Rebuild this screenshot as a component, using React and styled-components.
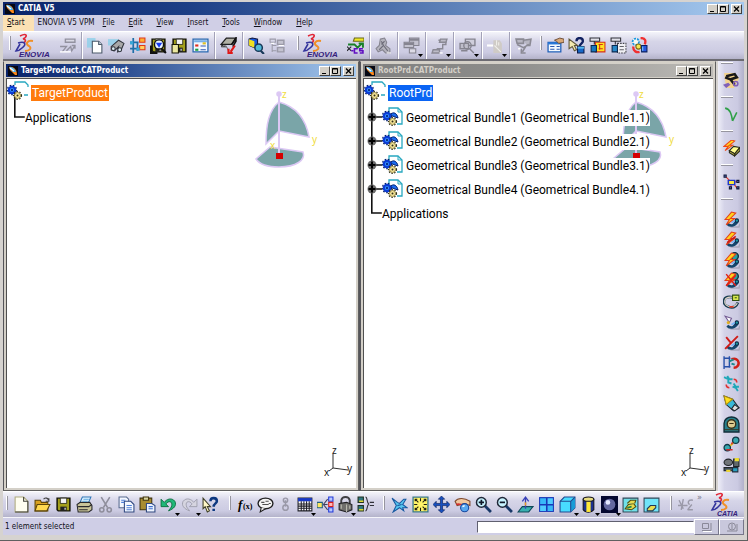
import React, { useState } from "react";
import styled, { createGlobalStyle } from "styled-components";

const GlobalStyle = createGlobalStyle`
  *, *::before, *::after {
    box-sizing: border-box;
    padding: 0;
    margin: 0;
  }

  body {
    background: #d4d0c8;
    font-family: "DejaVu Sans Condensed", "Noto Sans", sans-serif;
    font-size: 8px;
    color: #101018;
  }

  button, input {
    font: inherit;
    color: inherit;
  }
`;

const Frame = styled.div`
  min-height: 100vh;
  display: flex;
  flex-direction: column;
  padding: 2px 3px 5px 3px;
  border-right: 1px solid #606060;
  border-bottom: 1px solid #606060;
  background: #d6d3d0;
`;

const TitleBar = styled.header`
  display: flex;
  align-items: center;
  height: 13px;
  padding: 0 2px;
  gap: 3px;
  color: ${props => (props.$inactive ? "#d4d0c8" : "#ffffff")};
  background: ${props => (props.$inactive
    ? "linear-gradient(90deg, #808080, #8c8c8a 40%, #bdbbb7)"
    : "linear-gradient(90deg, #0a246a, #1d3f86 25%, #a6caf0)")};
`;

const Title = styled.h1`
  flex: 1;
  font-family: "DejaVu Sans Condensed", sans-serif;
  font-size: 8px;
  line-height: 12px;
  font-weight: bold;
  white-space: nowrap;
`;

const WindowButtons = styled.div`
  display: flex;

  & > :last-child {
    margin-left: 2px;
  }
`;

const WindowButton = styled.button`
  width: 11px;
  height: 10px;
  display: flex;
  border: 1px solid;
  border-color: #ffffff #404040 #404040 #ffffff;
  background: #d4d0c8;
`;

const MenuBar = styled.nav`
  display: flex;
  height: 16px;
  background: #d0cfe6;
`;

const MenuItem = styled.button`
  padding: 0 7px;
  border: none;
  font-size: 8px;
  line-height: 14px;
  white-space: nowrap;
  background: ${props => (props.$open ? "#fbe1b4" : "transparent")};

  &:first-child {
    padding: 0 9px 0 4px;
  }

  &:nth-child(2) {
    padding: 0 1px 0 4px;
  }
`;

const ToolBar = styled.div`
  display: flex;
  align-items: center;
  height: ${props => (props.$bottom ? "26px" : "28px")};
  border-top: 1px solid #ffffff;
  background: linear-gradient(#f4f4fa, #d6d5e8 35%, #cccbe2 75%, #b4b3ca);
`;

const ToolGroup = styled.div`
  display: flex;
  align-items: center;
  align-self: stretch;
  padding: 0 3px;
  border-right: ${props => (props.$divided ? "1px solid #a3a2b8" : "none")};
  box-shadow: ${props => (props.$divided ? "1px 0 #ffffff" : "none")};
`;

const SideBar = styled.aside`
  display: flex;
  flex-direction: column;
  align-items: center;
  width: 26px;
  margin-left: 2px;
  padding: 1px 0 10px;
  background: linear-gradient(90deg, #eeeef8, #d4d3e8 25%, #cbcae2 75%, #b2b1ca);
`;

const SideGroup = styled.div`
  display: flex;
  flex-direction: column;
  justify-content: space-between;
  padding: ${props => (props.$fill ? "9px 0 6px" : "6px 0")};
  flex: ${props => (props.$fill ? 1 : "none")};
`;

const Grip = styled.span`
  flex: none;
  align-self: flex-start;
  width: 2px;
  height: 14px;
  margin: ${props => (props.$wide ? "4px 4px 0 8px" : "4px 3px 0")};
  border-left: 1px solid #ffffff;
  border-right: 1px solid #96959f;
`;

const SideGrip = styled.span`
  width: 12px;
  height: 2px;
  margin-right: 8px;
  border-top: 1px solid #ffffff;
  border-bottom: 1px solid #96959f;
`;

const Tool = styled.button`
  position: relative;
  flex: none;
  width: ${props => props.$size || 21}px;
  height: 20px;
  display: flex;
  align-items: center;
  justify-content: center;
  border: none;
  background: transparent;
`;

const Drop = styled.svg`
  position: absolute;
  right: -1px;
  bottom: -1px;
`;

const Workspace = styled.main`
  flex: 1;
  display: flex;
  border-top: 2px solid #6c6b72;
`;

const Documents = styled.div`
  flex: 1;
  display: grid;
  grid-template-columns: 1fr 1fr;
  gap: 1px;
  background: #55555a;
`;

const DocWindow = styled.section`
  display: flex;
  flex-direction: column;
  padding: 2px;
  border: 1px solid;
  border-color: #d4d0c8 #606060 #606060 #55555a;
  background: #d4d0c8;
`;

const Viewport = styled.div`
  flex: 1;
  position: relative;
  margin-top: 1px;
  border-top: 1px solid #505050;
  border-left: 1px solid #505050;
  background: #ffffff;
`;

const Tree = styled.ul`
  list-style: none;
`;

const TreeRow = styled.li`
  display: flex;
  align-items: center;
  height: ${props => (props.$root ? "27px" : "24px")};
  padding-left: ${props => (props.$root ? "0" : "7px")};
`;

const Label = styled.span`
  position: relative;
  z-index: 1;
  padding: ${props => (props.$mark ? "0 1px" : "0")};
  margin-left: ${props => (props.$gap ? "3px" : "0")};
  font-family: Roboto, "Noto Sans", sans-serif;
  font-size: 12px;
  line-height: 16px;
  white-space: nowrap;
  color: ${props => (props.$mark ? "#ffffff" : "#000000")};
  background: ${props => props.$mark || "#ffffff"};
`;

const Compass = styled.svg`
  position: absolute;
  top: 1px;
  right: 35px;
`;

const Axes = styled.svg`
  position: absolute;
  right: 0;
  bottom: 8px;
`;

const StatusBar = styled.footer`
  display: flex;
  align-items: center;
  height: 18px;
  padding-left: 2px;
  border-top: 1px solid #f4f4fa;
  background: #cfcee6;
`;

const StatusText = styled.p`
  flex: 1;
  font-size: 8px;
`;

const CommandInput = styled.input`
  width: 29.4%;
  height: 12px;
  padding: 0 2px;
  border: 1px solid;
  border-color: #606070 #ffffff #ffffff #606070;
  background: #ffffff;
`;

const StatusButton = styled.button`
  width: 25px;
  height: 16px;
  display: flex;
  align-items: center;
  justify-content: center;
  border: 1px solid;
  border-color: #ffffff #77768a #77768a #ffffff;
  background: #c9c8dc;
`;

const Chevron = styled.span`
  align-self: flex-start;
  font-size: 9px;
  color: #77768a;
`;

const Spacer = styled.span`
  flex: 1;
`;

const gears = (
  <>
    <circle cx="5" cy="5" r="3.200" fill="#3a9cff" stroke="#0a3cd8" strokeWidth="2.200" />
    <circle cx="5" cy="5" r="4.700" fill="none" stroke="#04206e" strokeWidth="1.200" strokeDasharray="1.600 1.600" />
    <circle cx="5" cy="5" r="1.200" fill="#0a2c90" />
    <circle cx="10.500" cy="10.500" r="3" fill="#f6e69c" stroke="#9a8a40" strokeWidth="1" />
    <circle cx="10.500" cy="10.500" r="4" fill="none" stroke="#303018" strokeWidth="1.200" strokeDasharray="1.400 1.500" />
    <circle cx="10.500" cy="10.500" r="1" fill="#303018" />
  </>
);

const bolt = <path d="M8 1 2 8l4 0-3 5 8-6H7l5-5z" fill="#ffd21c" stroke="#e4421c" strokeWidth="1" />;
const roll = (
  <>
    <path d="M7 15h8l1-3" fill="none" stroke="#a9a8bd" strokeWidth="1.5" />
    <path d="M4 12c3 3 8 2 10-3M10 13l4-5" fill="none" stroke="#14466c" strokeWidth="2.4" />
    <circle cx="13" cy="9" r="1.6" fill="#1c9ca0" stroke="#102848" />
    <path d="M8 11l3-2" stroke="#6fb6ff" strokeWidth="1.4" />
  </>
);
const floppy = (
  <>
    <path d="M2 2h12v12H3l-1-1z" fill="#a4a01c" stroke="#141408" strokeWidth="1.4" />
    <path d="M5 2h6v5H5z" fill="#f4f4f4" stroke="#141408" strokeWidth=".7" />
    <path d="M5 10h6v4H5z" fill="#202020" />
    <path d="M9 11h1v2H9z" fill="#fff" />
  </>
);

const icons = {
  publish: <g fill="none" stroke="#92919f" strokeWidth="1.3"><path d="M6 2h9v3H6z" fill="#d9d8e4" /><path d="M1 9h6l-4 5M7 13l4-4 1 4 3-5M12 8h3v3" /><path d="M1 14h10" stroke="#fff" /></g>,
  openDoc: <><path d="M0 1h8v9H0z" fill="#8ccfea" opacity=".8" /><path d="M5 4h6l3 3v8H5z" fill="#fff" stroke="#4a5868" /><path d="M11 4v3h3" fill="#c8d8e4" stroke="#4a5868" /></>,
  search: <><path d="M0 2h10v6H0z" fill="#8ccfea" opacity=".8" /><path d="M3 9l7-6 5 3-3 7-3 1 1-5-4 4-3-1z" fill="#a8a8a8" stroke="#30343c" /><circle cx="5" cy="11" r="1.8" fill="#d8e8f0" stroke="#30343c" /><circle cx="11" cy="12" r="1.8" fill="#d8e8f0" stroke="#30343c" /></>,
  structure: <><path d="M4 1v14M1 5h8M1 11h14M8 5v8" stroke="#1f6fa8" strokeWidth="1.6" fill="none" /><path d="M10 1h5v4h-5z" fill="#ffb030" stroke="#e03818" /><path d="M10 8h5v4h-5z" fill="#ffd060" stroke="#e03818" /><path d="M1 4h3v3H1zM7 10h3v3H7z" fill="#38a8d8" /></>,
  saveSearch: <>{floppy}<path d="M1 8v7h6M11 11l4 4" stroke="#101010" strokeWidth="2" fill="none" /><circle cx="8.5" cy="7" r="4.3" fill="#e8f4ff" stroke="#101010" strokeWidth="1.3" /><path d="M5.500 5.500h6l-3 4.500z" fill="#1438f0" /></>,
  save: floppy,
  saveOptions: <>{floppy}<path d="M1 7h6v8H1z" fill="#ece8a0" stroke="#181808" /></>,
  list: <><path d="M1 2h14v12H1z" fill="#f4f8ff" stroke="#2868b0" strokeWidth="1.2" /><path d="M2 3h12v2H2z" fill="#78b0e8" /><path d="M3 7h3v2H3z" fill="#e03020" /><path d="M3 11h3v2H3z" fill="#20a040" /><path d="M10 5h3v2h-3z" fill="#e0c020" /><path d="M8 8.500h5M8 12h5" stroke="#3058b0" /></>,
  hammer: <><path d="M1 7l5-6h9l-4 6z" fill="#b0b0a4" stroke="#202020" strokeWidth="1.200" /><path d="M11 7l4-6v3l-3 5M2 7v2h4" fill="none" stroke="#101010" strokeWidth="1.500" /><path d="M2 9c3-2 5 1 6 4" stroke="#777" fill="none" /><path d="M14 8l-4 6M8 11v4h4" fill="none" stroke="#e01818" strokeWidth="2" /></>,
  cubeFind: <><path d="M1 2l3-1 5 1v7l-3 1-5-2z" fill="#1858e0" stroke="#101840" /><path d="M1 2l5 2v6L1 8z" fill="#f0e020" /><circle cx="10" cy="10" r="3.500" fill="#50b8d8" stroke="#183858" strokeWidth="1.400" /><path d="M12 13l3 3" stroke="#183858" strokeWidth="2" /></>,
  greyTree: <g fill="none" stroke="#9b9aa8"><path d="M1 2h5v3H1zM3 5v9M3 8h4M3 13h4" /><path d="M8 3h6v4H8zM8 10h6v4H8z" fill="#c4c3d0" strokeWidth="1.400" /><path d="M2 6h3M9 8h5" stroke="#fff" /></g>,
  vpm: <><path d="M7 1h9v3H6z" fill="#f0e828" stroke="#686818" /><path d="M1 7h6l3 3 4-4M11 6h4v4" fill="none" stroke="#188028" strokeWidth="1.800" /><path d="M0 9l4 4M4 9l-4 4" stroke="#202028" /><path d="M10 11H7v4h3M15 11h-3v2h3v2h-3M6 13H4" fill="none" stroke="#6010c0" strokeWidth="1.500" /></>,
  greyClip: <g fill="#b4b3bd" stroke="#85848f"><path d="M5 2l4-1 2 4-1 3 4 3v4l-4 0-3-3-4 2-2-3 3-3z" /><path d="M6 4l2 4-4 4M8 8l4 5M9 4l-3 3" fill="none" stroke="#6c6b78" /><path d="M11 15h4" stroke="#fff" /></g>,
  greyWindows: <g fill="#c3c2cf" stroke="#858490"><path d="M6 1h9v7H6z" /><path d="M1 5h9v5H1z" /><path d="M6 11h6v4H6z" fill="#dcdbe6" /><path d="M6 2.500h9M1 6.500h9" strokeWidth="2" /></g>,
  greyStep: <g fill="none" stroke="#8a8994" strokeWidth="1.300"><path d="M7 3h7v4h-3v4H6v3H1" /><path d="M9 2l6 0-1 3H8zM2 12h6v3H1z" fill="#bcbbc7" /><path d="M8 15h3" stroke="#fff" /></g>,
  greyZoomWin: <g fill="none" stroke="#85848f" strokeWidth="1.300"><path d="M6 2h9v6H6z" fill="#cfcedb" /><path d="M1 6h8v5H1z" fill="#bebdca" /><circle cx="8" cy="8" r="3.500" /><path d="M10 11l4 4M2 13h6" /></g>,
  greyHand: <g><path d="M0 8h6" stroke="#fff" strokeWidth="2" /><path d="M6 3h6l2 3v9H6z" fill="#cfcbc6" /><path d="M9 3v5M11 5v3M7 8l6 6" stroke="#efeeea" /></g>,
  greyHammer: <g fill="none" stroke="#8b8a94" strokeWidth="1.500"><path d="M1 2h7v4H2zM8 3l7-1-1 6h-3" fill="#b7b6c2" /><path d="M2 7l6 3 5-3M10 9l-3 5M6 11v4h4" /><path d="M3 11h2" stroke="#fff" /></g>,
  props: <><path d="M1 5h12v9H1z" fill="#f4faff" stroke="#2060b8" strokeWidth="1.200" /><path d="M1 5h12v2H1z" fill="#2878d8" /><path d="M3 9h4M3 11.500h4M9 9h3M9 11.500h3" stroke="#2858b0" /><path d="M7 3l5-2 4 1v3l-5 1-2-2z" fill="#d8a878" stroke="#604028" strokeWidth=".8" /></>,
  helpDb: <><path d="M1 2v9l3-2 2 4 2-1-2-4h3z" fill="#f4eab0" stroke="#605838" /><path d="M8 4c0-4 6-4 6 0 0 2-3 2-3 5" fill="none" stroke="#102060" strokeWidth="2.200" /><path d="M9 9h6v6H9z" fill="#1868c8" stroke="#081848" /><path d="M9 9h6v2H9z" fill="#58b8f0" /></>,
  dbYellow: <><path d="M6 5h9v9H6z" fill="#ffe020" stroke="#d83018" /><path d="M1 1h9v3H1zM5 4v3" fill="#e0e0e8" stroke="#303038" /><path d="M2 8h5v6H2z" fill="#1878c0" stroke="#082850" /><path d="M9 7h4M9 11h4M10 7v5" stroke="#d83018" /></>,
  dbGrey: <><path d="M7 6h8v9H7z" fill="#f0f0f4" stroke="#404048" strokeDasharray="1.500 1" /><path d="M1 1h9v3H1zM5 4v3" fill="#e0e0e8" stroke="#303038" /><path d="M2 8h5v6H2z" fill="#2888c8" stroke="#082850" /><path d="M9 9h4M9 12h4" stroke="#606068" /></>,
  dbSync: <><path d="M9 1c5 0 5 3 4 6M2 9c0 4 3 6 6 5" fill="none" stroke="#f03030" strokeWidth="2.200" /><circle cx="4.500" cy="4.500" r="3" fill="#f8f8f0" stroke="#1898e0" strokeWidth="1.600" strokeDasharray="2 1" /><circle cx="7" cy="9" r="2.400" fill="#f4e850" stroke="#806810" /><path d="M10 8h5v6h-5z" fill="#2858e0" stroke="#082060" /><path d="M11 9v4" stroke="#78d0ff" /></>,
  newDoc: <><path d="M2 1h8l4 4v10H2z" fill="#fffef0" stroke="#b0ac80" /><path d="M10 1v4h4M14 5v10H2" fill="none" stroke="#404038" /></>,
  open: <><path d="M1 4h5l1 2h6v8H1z" fill="#d8a020" stroke="#5c4408" /><path d="M3 8h12l-3 6H1z" fill="#ffd850" stroke="#5c4408" /><path d="M9 3c2-2 4-1 5 1M14 2v3h-3" fill="none" stroke="#404040" /></>,
  print: <><path d="M6 1h8l-3 7H3z" fill="#e4f4ff" stroke="#3078b8" /><path d="M1 8l3-2h9l2 3v4l-3 2H2z" fill="#c8c498" stroke="#28282c" /><path d="M2 10h10l3-2M3 13h8" stroke="#28282c" fill="none" /><path d="M7 3h5M6 5h5" stroke="#58a8e0" /></>,
  cut: <g fill="none" stroke="#8f8e9c" strokeWidth="1.500"><path d="M4 1l6 10M12 1L6 11" /><circle cx="4.500" cy="13" r="2" /><circle cx="11.500" cy="13" r="2" /></g>,
  copy: <><path d="M1 1h7l2 2v8H1z" fill="#f4f8ff" stroke="#5a6c90" /><path d="M6 5h6l3 3v7H6z" fill="#f4f8ff" stroke="#304880" /><path d="M8 9h5M8 11h5M8 13h5M3 4h4M3 6h3" stroke="#5080d8" /></>,
  paste: <><path d="M1 2h11v11H1z" fill="#a88c30" stroke="#40340c" /><path d="M4 1h5v3H4z" fill="#d8d4a0" stroke="#40340c" /><path d="M7 7h5l3 2v6H7z" fill="#eef4ff" stroke="#304880" /><path d="M9 10h4M9 12h4" stroke="#4070d0" /></>,
  undo: <path d="M1 3v7h7L5.500 7.500C8 4 12 5 11 9c0 2-2 3-3 5 5-2 8-5 6-9-3-4-8-2-10 1z" fill="#20b878" stroke="#086838" strokeWidth=".8" />,
  redo: <path d="M15 3v7H8l2.500-2.500C8 4 4 5 5 9c0 2 2 3 3 5C3 12 0 9 2 5c3-4 8-2 10 1z" fill="#d6d5e0" stroke="#9a99a8" strokeWidth=".8" />,
  help: <><path d="M1 2v10l2-2 2 5 2-1-2-4h3z" fill="#fff8c8" stroke="#404028" /><path d="M8 5c0-4 6-4 6 0 0 2-3 2-3 5M11 12v2" fill="none" stroke="#0c3880" strokeWidth="2.400" /></>,
  comment: <><ellipse cx="8" cy="7" rx="7" ry="5" fill="#f4f4f4" stroke="#202020" strokeWidth="1.300" /><path d="M4 11l-1 4 5-3" fill="#f4f4f4" stroke="#202020" /><path d="M4 6h3M8 5h3M5 8h6M11 7h2" stroke="#505050" /></>,
  link: <g fill="none" stroke="#9a99a8" strokeWidth="1.400"><circle cx="8" cy="4" r="2" /><circle cx="8" cy="11" r="2.500" /><path d="M8 4v6" /></g>,
  table: <><path d="M1 2h13v12H1z" fill="#fff" stroke="#202028" /><path d="M1 2h13v3H1z" fill="#1838c8" /><path d="M1 7.500h13M1 9.500h13M1 11.500h13M4 5v9M6.500 5v9M9 5v9M11.500 5v9" stroke="#202028" strokeWidth="1" /></>,
  graph: <><path d="M6 8l4-5M6 8h4M6 8l4 5" stroke="#404060" /><path d="M0 6h5v5H0z" fill="#ffe860" stroke="#206080" /><path d="M11 1h4v4h-4z" fill="#b8c8ff" stroke="#2038d8" /><path d="M11 6h4v4h-4z" fill="#ffb8b8" stroke="#d82020" /><path d="M11 11h4v4h-4z" fill="#b8c8ff" stroke="#2038d8" /></>,
  lock: <><path d="M4 7V4c1-4 7-4 8 0v4" fill="none" stroke="#404044" strokeWidth="1.800" /><path d="M2 7l7-1 5 2v5l-5 2-7-2z" fill="#706f6c" stroke="#202024" /><path d="M9 8v7M4 8v4M12 9v3" stroke="#bcbcb0" /></>,
  equiv: <><path d="M1 1h5v5H1zM1 9h5v5H1z" fill="#307880" stroke="#203020" /><path d="M2 5h4M2 13h4" stroke="#e0d830" strokeWidth="1.500" /><path d="M8 1c2 0 1 5 3 6.500C9 9 10 14 8 14M12 6h4M12 9h4" fill="none" stroke="#303038" /></>,
  fly: <><path d="M1 2l5 4 2 1 4-4 2 0-3 5 4 3-4 0 1 3-4-3-6 4 3-6z" fill="#58c8f0" stroke="#1858a0" /><path d="M6 9l4-1" stroke="#1858a0" strokeWidth="1.200" /></>,
  fit: <><path d="M1 1h14v14H1z" fill="#fff468" stroke="#38788c" strokeWidth="1.200" /><path d="M3 5V3h2M11 3h2v2M3 11v2h2M11 13h2v-2M3 3l3 3M13 3l-3 3M3 13l3-3M13 13l-3-3M8 2v3M8 11v3M2 8h3M11 8h3" fill="none" stroke="#202010" /></>,
  pan: <path d="M8 0l3 3H9v4h4V5l3 3-3 3V9H9v4h2l-3 3-3-3h2V9H3v2L0 8l3-3v2h4V3H5z" fill="#1850c0" stroke="#081c58" strokeWidth=".6" />,
  rotate: <><path d="M1 5c3-4 9-3 14 0v4l-5-2-7 2z" fill="#f0c8a0" stroke="#804c30" /><path d="M2 8c3-1 5 0 7 1" stroke="#d03030" strokeWidth="1.500" fill="none" /><circle cx="10" cy="11" r="3.800" fill="#58a8f0" stroke="#1848a0" /><path d="M8 10l2-1" stroke="#fff" strokeWidth="1.400" /></>,
  zoomIn: <><path d="M9 9l6 6" stroke="#183868" strokeWidth="2.600" /><circle cx="6" cy="6" r="4.600" fill="#c8f4ff" stroke="#202838" strokeWidth="1.400" /><path d="M6 3.500v5M3.500 6h5" stroke="#101828" strokeWidth="1.600" /></>,
  zoomOut: <><path d="M9 9l6 6" stroke="#183868" strokeWidth="2.600" /><circle cx="6" cy="6" r="4.600" fill="#c8f4ff" stroke="#202838" strokeWidth="1.400" /><path d="M3.500 6h5" stroke="#101828" strokeWidth="1.600" /></>,
  normal: <><path d="M5 10h10l-4 5H1z" fill="#38b0b0" stroke="#104858" /><path d="M8 12V2M5 5l3-4 3 4" fill="none" stroke="#3840b8" strokeWidth="1.200" /><path d="M8 6v3" stroke="#f0a020" strokeWidth="1.400" /></>,
  multiView: <><path d="M1 1h14v14H1z" fill="#1838b8" /><path d="M2 2h5.500v5.500H2zM9 9h5v5H9z" fill="#38b8f8" /><path d="M9 2h5v5.500H9zM2 9h5.500v5H2z" fill="#50ccff" /></>,
  cube: <><path d="M1 5l4-4h10v10l-4 4H1z" fill="#48dcff" stroke="#204890" /><path d="M11 5l4-4v10l-4 4z" fill="#189cd8" /><path d="M1 5h10v10M11 5l4-4" fill="none" stroke="#204890" /></>,
  shaded: <><path d="M3 3v10c2 3 8 3 10 0V3z" fill="#1c3090" stroke="#14141c" /><path d="M6 4h4v11H6z" fill="#ffe838" /><ellipse cx="8" cy="3" rx="5" ry="2" fill="#e8dc80" stroke="#14141c" /></>,
  sphere: <><path d="M0 0h16v16H0z" fill="#040830" /><circle cx="8" cy="8" r="5.500" fill="#6468a0" /><circle cx="6.500" cy="6" r="2.200" fill="#e4e8ff" /></>,
  hide: <><path d="M1 2h14v13H1z" fill="#70e0e8" stroke="#304858" /><path d="M3 12l3-4 5-1 2 3-4 3z" fill="#e8dc50" stroke="#504c10" /><path d="M5 7l3-3 5 0-1 3" fill="#e8dc50" stroke="#504c10" /><path d="M5 11l4-1" stroke="#18804c" strokeWidth="1.500" /></>,
  swap: <><path d="M1 2h14v13H1z" fill="#70e4f8" stroke="#304858" /><path d="M4 12l3-3h5v2l-3 3H4z" fill="#e8dc50" stroke="#203858" /></>,
  sketch: <g fill="none" stroke="#9a99a8" strokeWidth="1.300"><path d="M1 4l4 8M5 3l-2 10M0 9h9M14 4c-5-1-5 3-3 4M9 13h5M13 8l-4 5" /></g>,
  arm: <><path d="M1 1h10l4 5-5 9H3z" fill="#ffd470" opacity=".75" /><path d="M3 4l8-2 2 3-6 2 4 5M2 5l5 2" fill="none" stroke="#181818" strokeWidth="2.400" /><path d="M0 12l5-2 2 2-4 3z" fill="#8060b8" /><circle cx="12" cy="11" r="2" fill="none" stroke="#8060b8" strokeWidth="1.500" /></>,
  curve: <path d="M2 2c5 1 6 6 7 12M9 14l4-8" fill="none" stroke="#30a048" strokeWidth="1.500" />,
  flashBox: <><path d="M8 0L1 6h4L2 10l7-5H6l5-4z" fill="#ffe020" stroke="#f04818" /><path d="M6 10l4-4 6 1-5 6z" fill="#fffc90" stroke="#282818" /><path d="M6 10l5 3v2l-5-3zM11 13l5-6v3l-5 5z" fill="#c8c048" stroke="#282818" /></>,
  nodes: <><path d="M3 3l4 4M10 8l3-1M8 9l-1 4M10 9l3 4" stroke="#e83020" /><path d="M5 6h6v4H5z" fill="#f8e840" stroke="#2038c8" strokeWidth="1.400" /><path d="M1 1h2v2H1zM13 6h2v2h-2zM6 12h2v2H6zM13 12h2v2h-2z" fill="#5868b8" stroke="#101838" /></>,
  bolt1: <>{roll}{bolt}</>,
  bolt2: <>{roll}{bolt}<path d="M4 11l8-6" stroke="#c81818" strokeWidth="1.500" /></>,
  bolt3: <>{roll}<circle cx="11" cy="4" r="3.400" fill="#28a0a0" stroke="#103848" strokeWidth="1.400" />{bolt}</>,
  bolt4: <>{roll}<circle cx="11" cy="4" r="3.400" fill="#28a0a0" stroke="#103848" strokeWidth="1.400" />{bolt}<path d="M3 2l9 11M12 3L3 13" stroke="#e02018" strokeWidth="1.400" /></>,
  hose: <><path d="M9 4C-1 2-1 11 5 13c3 1 7 1 9-4" fill="none" stroke="#183c50" strokeWidth="2.600" /><path d="M9 4C0 3 0 10 5 12.500c3 1 6 1 8.500-3" fill="none" stroke="#e4d8c8" /><path d="M9 2h6v5H9z" fill="#d8e850" stroke="#305010" /><path d="M11 4h2v1h-2z" fill="#305010" /><path d="M6 13h4" stroke="#e03018" strokeWidth="1.400" /></>,
  trace: <>{roll}<path d="M2 3l6 2-2 4z" fill="#fff" stroke="#705890" /><circle cx="5" cy="9" r="1.500" fill="#e0b020" /></>,
  traceOff: <>{roll}<path d="M2 14L14 2M3 3l5 6" stroke="#d01c18" strokeWidth="1.800" /></>,
  magnet: <><path d="M1 2v12M1 4h6M1 12h6M6 2v11" stroke="#2850a8" strokeWidth="1.300" fill="none" /><path d="M8 5c8-3 9 8 2 8" fill="none" stroke="#d02018" strokeWidth="2.400" /><path d="M6 7l4-2M8 9l3 1" stroke="#18888c" strokeWidth="1.800" /></>,
  route: <><path d="M1 2l4 2v3l3 1M4 1l2 3h3M9 11l3 1 2 3M10 8l2 3h3" fill="none" stroke="#20a8b8" strokeWidth="1.800" /><path d="M6 12c-2 0-3-1-3-3M10 4c2 0 3 1 3 3" fill="none" stroke="#e03030" strokeWidth="1.400" /></>,
  marker: <><path d="M1 1l8 3 6 8-5 3-7-6z" fill="#38b8d8" stroke="#202830" /><path d="M1 1l8 3-6 5z" fill="#ffe020" stroke="#b09010" /><path d="M11 9l4 3-4 3-3-2z" fill="#dedede" stroke="#202830" /></>,
  clamp: <><path d="M1 15V7c0-8 14-8 14 0v8z" fill="#28808c" stroke="#102c38" strokeWidth="1.300" /><circle cx="8" cy="7.500" r="4" fill="#dccc90" stroke="#383018" strokeWidth="1.300" /><path d="M6 7h4M1 13h14" stroke="#383018" /></>,
  joint: <><path d="M5 11l6-6" stroke="#e8d030" strokeWidth="2" /><circle cx="12" cy="4" r="3" fill="#38a8b0" stroke="#103848" strokeWidth="1.200" /><circle cx="4" cy="11" r="3" fill="#38a8b0" stroke="#103848" strokeWidth="1.200" /><path d="M3 13h6M8 8l1-2" stroke="#d02828" strokeWidth="1.400" /></>,
  pipes: <><ellipse cx="5" cy="5" rx="4" ry="3" fill="#707478" stroke="#202428" /><path d="M10 2h5v7h-5z" fill="#60686c" stroke="#202428" /><path d="M11 1h4v3h-4z" fill="#f0e030" /><path d="M1 10h8v3H1z" fill="#485868" stroke="#202428" /><path d="M9 10h5v4H9z" fill="#28a0c0" stroke="#203040" /><path d="M3 13h4" stroke="#f0d830" strokeWidth="2" /></>,
};

function Icon({ name }) {
  if (name === "formula") {
    return (
      <svg width="17" height="16" viewBox="0 0 17 16">
        <text x="1" y="12" fontFamily="Liberation Serif, serif" fontStyle="italic" fontWeight="bold" fontSize="13">f</text>
        <text x="6" y="12" fontFamily="Liberation Serif, serif" fontWeight="bold" fontSize="8">(x)</text>
      </svg>
    );
  }
  return <svg width="17" height="17" viewBox="0 0 16 16">{icons[name]}</svg>;
}

function Brand({ name, width }) {
  const catia = name === "CATIA";
  return (
    <svg width={width} height="26" viewBox={`0 0 ${width} 26`} role="img" aria-label={name}>
      <path d="M6 3c2-1 5-2 6-1 1 2-1 3-3 4 3 0 3 2 1 4" fill="none" stroke="#e02838" strokeWidth="1.600" />
      <path d="M4 10c7-2 9 1 4 5-2 2-4 3-6 3l4-7" fill="none" stroke="#34349c" strokeWidth="1.600" />
      <path d="M19 8c-6-1-8 3-4 5 3 2 1 5-4 5" fill="none" stroke="#f09028" strokeWidth="2" />
      <text x={catia ? 7 : 5} y="24" fontFamily="Liberation Sans, sans-serif" fontSize={catia ? 7 : 8} fontWeight="bold" fontStyle="italic" fill="#34207c">{name}</text>
    </svg>
  );
}

function AppIcon() {
  return (
    <svg width="10" height="10" viewBox="0 0 10 10">
      <path d="M0 0h10v10H0z" fill="#050814" />
      <path d="M1 1c5-1 8 3 8 8L7 9 2 4z" fill="#ff8a1c" />
      <path d="M1 1c4 0 6 2 7 5L5 6z" fill="#3cb4ff" />
      <path d="M2 2l4 3" stroke="#fff" strokeWidth="1.300" />
    </svg>
  );
}

function WindowControls() {
  return (
    <WindowButtons>
      <WindowButton aria-label="Minimize"><svg width="9" height="8"><path d="M2 6.500h4" stroke="#000" strokeWidth="1" /></svg></WindowButton>
      <WindowButton aria-label="Maximize"><svg width="9" height="8"><path d="M1.500 1.500h5v5h-5zM1.500 2h5" fill="none" stroke="#000" /></svg></WindowButton>
      <WindowButton aria-label="Close"><svg width="9" height="8"><path d="M2 1.500l5 5M7 1.500l-5 5" stroke="#000" strokeWidth="1.300" /></svg></WindowButton>
    </WindowButtons>
  );
}

// a trailing "+" on a name marks a button with a flyout arrow
function Tools({ names, size }) {
  return names.map(item => {
    const name = item.replace("+", "");
    return (
      <Tool key={name} $size={size} aria-label={name}>
        <Icon name={name} />
        {item.endsWith("+") && <Drop width="5" height="3"><path d="M0 0h5L2.500 3z" /></Drop>}
      </Tool>
    );
  });
}

const RootIcon = () => (
  <svg width="24" height="27" viewBox="0 0 24 27">
    <path d="M8 6V3h10l3 3v2M17 16h4" fill="none" stroke="#28a8c0" strokeWidth="1.300" />
    <path d="M7.800 14v13" stroke="#101010" strokeWidth="1.600" />
    <g transform="translate(0 6)">{gears}</g>
  </svg>
);

const BundleIcon = () => (
  <svg width="21" height="22" viewBox="0 0 21 22">
    <path d="M7 7V1h9l4 4v12h-5" fill="#fff" stroke="#28a8c0" strokeWidth="1.300" />
    <path d="M16 1v4h4" fill="none" stroke="#28a8c0" />
    <path d="M8 8c3-4 7-2 8 3l-3-1z" fill="#1c6cf0" stroke="#04206e" />
    <g transform="translate(0 4)">{gears}</g>
  </svg>
);

const LastBranch = () => (
  <svg width="11" height="24" viewBox="0 0 11 24">
    <path d="M.800 0v11h10" fill="none" stroke="#101010" strokeWidth="1.600" />
  </svg>
);

const Expander = styled.button`
  width: 16px;
  height: 24px;
  margin-left: -5px;
  border: none;
  background: transparent;
`;

function ExpandBranch({ name }) {
  return (
    <Expander aria-label={`Expand ${name}`}>
      <svg width="16" height="24" viewBox="0 0 16 24">
        <path d="M5.800 0v24M5 11h11" stroke="#101010" strokeWidth="1.600" />
        <circle cx="6" cy="11" r="4.500" fill="#6c6c6c" />
        <path d="M6 7.500v7M2.500 11h7" stroke="#000" strokeWidth="2" />
      </svg>
    </Expander>
  );
}

function Document({ title, inactive, root, mark, bundles }) {
  return (
    <DocWindow>
      <TitleBar $inactive={inactive}>
        <AppIcon />
        <Title as="h2">{title}</Title>
        <WindowControls />
      </TitleBar>
      <Viewport>
        <Compass width="70" height="92" viewBox="250 80 70 92">
          <g fill="#7aa5a8" stroke="#dcc8f4" strokeWidth="1.500">
            <path d="M278 102c18 5 27 18 30 35l-30-6z" />
            <path d="M278 102c-10 8-13 22-13 42l13-13z" />
            <path d="M269 147l33 5c3 8-7 15-24 15-12 0-19-2-23-8z" />
            <path d="M278 94v60" strokeWidth="2" />
            <circle cx="278" cy="94" r="2" fill="#dcc8f4" />
          </g>
          <path d="M275 153h7v6h-7z" fill="#d40000" />
          <g fill="#f0dc40" fontFamily="Noto Sans, sans-serif" fontSize="10">
            <text x="281" y="98">z</text>
            <text x="311" y="143">y</text>
            {!inactive && <text x="269" y="149">x</text>}
          </g>
        </Compass>
        <Tree>
          <TreeRow $root>
            <RootIcon />
            <Label $mark={mark}>{root}</Label>
          </TreeRow>
          {bundles.map(name => (
            <TreeRow key={name}>
              <ExpandBranch name={name} />
              <BundleIcon />
              <Label $gap>{`${name} (${name}.1)`}</Label>
            </TreeRow>
          ))}
          <TreeRow>
            <LastBranch />
            <Label>Applications</Label>
          </TreeRow>
        </Tree>
        <Axes width="34" height="40" viewBox="322 438 34 40">
          <path d="M333 452v14l15 2M333 466l-4 3" fill="none" stroke="#303030" />
          <g fill="#202020" fontFamily="Noto Sans, sans-serif" fontSize="10">
            <text x="332" y="452">z</text>
            <text x="347" y="470">y</text>
            <text x="324" y="474">x</text>
          </g>
        </Axes>
      </Viewport>
    </DocWindow>
  );
}

const menus = [
  ["", "S", "tart"],
  ["ENOVIA V5 VPM", "", ""],
  ["", "F", "ile"],
  ["", "E", "dit"],
  ["", "V", "iew"],
  ["", "I", "nsert"],
  ["", "T", "ools"],
  ["", "W", "indow"],
  ["", "H", "elp"],
];

const bundles = ["Geometrical Bundle1", "Geometrical Bundle2", "Geometrical Bundle3", "Geometrical Bundle4"];

function App() {
  const [open, setOpen] = useState(0);
  const [command, setCommand] = useState("");

  return (
    <Frame>
      <GlobalStyle />
      <TitleBar>
        <AppIcon />
        <Title>CATIA V5</Title>
        <WindowControls />
      </TitleBar>
      <MenuBar>
        {menus.map(([before, key, after], i) => (
          <MenuItem key={before + key} $open={open === i} onClick={() => setOpen(i)}>
            {before}{key && <u>{key}</u>}{after}
          </MenuItem>
        ))}
      </MenuBar>
      <ToolBar>
        <ToolGroup $divided>
          <Grip />
          <Brand name="ENOVIA" width={43} />
          <Tools names={["publish"]} />
        </ToolGroup>
        <ToolGroup $divided><Tools names={["openDoc", "search", "structure", "saveSearch", "saveOptions", "list"]} /></ToolGroup>
        <ToolGroup $divided><Tools names={["hammer"]} /></ToolGroup>
        <ToolGroup><Tools names={["cubeFind", "greyTree"]} /></ToolGroup>
        <ToolGroup $divided>
          <Grip />
          <Brand name="ENOVIA" width={43} />
          <Tools names={["vpm"]} />
        </ToolGroup>
        <ToolGroup $divided><Tools names={["greyClip"]} /></ToolGroup>
        <ToolGroup $divided><Tools names={["greyWindows+"]} /></ToolGroup>
        <ToolGroup $divided><Tools names={["greyStep+"]} /></ToolGroup>
        <ToolGroup $divided><Tools names={["greyZoomWin+"]} /></ToolGroup>
        <ToolGroup $divided><Tools names={["greyHand+"]} /></ToolGroup>
        <ToolGroup><Tools names={["greyHammer"]} /></ToolGroup>
        <Grip />
        <Tools names={["props", "helpDb", "dbYellow", "dbGrey", "dbSync"]} />
      </ToolBar>
      <Workspace>
        <Documents>
          <Document title="TargetProduct.CATProduct" root="TargetProduct" mark="#ff7a0c" bundles={[]} />
          <Document title="RootPrd.CATProduct" root="RootPrd" mark="#0a64f4" bundles={bundles} inactive />
        </Documents>
        <SideBar>
          {["arm", "curve", "flashBox", "nodes"].map(name => (
            <React.Fragment key={name}>
              <SideGrip />
              <SideGroup><Tools names={[name]} /></SideGroup>
            </React.Fragment>
          ))}
          <SideGrip />
          <SideGroup $fill>
            <Tools names={["bolt1", "bolt2", "bolt3", "bolt4", "hose", "trace", "traceOff", "magnet", "route", "marker", "clamp", "joint", "pipes"]} />
          </SideGroup>
        </SideBar>
      </Workspace>
      <ToolBar $bottom>
        <Grip />
        <Tools names={["newDoc", "open", "save", "print", "cut", "copy", "paste", "undo+", "redo+", "help"]} />
        <Grip $wide />
        <Tools size={20} names={["formula", "comment", "link", "table+", "graph", "lock+", "equiv"]} />
        <Grip $wide />
        <Tools names={["fly", "fit", "pan", "rotate", "zoomIn", "zoomOut", "normal", "multiView", "cube+", "shaded+", "sphere+", "hide", "swap"]} />
        <Grip $wide />
        <Tools names={["sketch"]} />
        <Chevron>»</Chevron>
        <Spacer />
        <Brand name="CATIA" width={34} />
      </ToolBar>
      <StatusBar>
        <StatusText>1 element selected</StatusText>
        <CommandInput aria-label="Command" value={command} onChange={e => setCommand(e.target.value)} />
        <StatusButton aria-label="Dialog">
          <svg width="12" height="10"><path d="M1.500 1.500h6v5h-6zM1 8.500h9V1" fill="none" stroke="#8a8998" /><path d="M2 9.500h9" stroke="#fff" /></svg>
        </StatusButton>
        <StatusButton aria-label="Power input">
          <svg width="12" height="10"><circle cx="6" cy="4.500" r="3.500" fill="none" stroke="#8a8998" /><path d="M6 2v5M1 9h10V2" fill="none" stroke="#8a8998" /></svg>
        </StatusButton>
      </StatusBar>
    </Frame>
  );
}

export default App;
